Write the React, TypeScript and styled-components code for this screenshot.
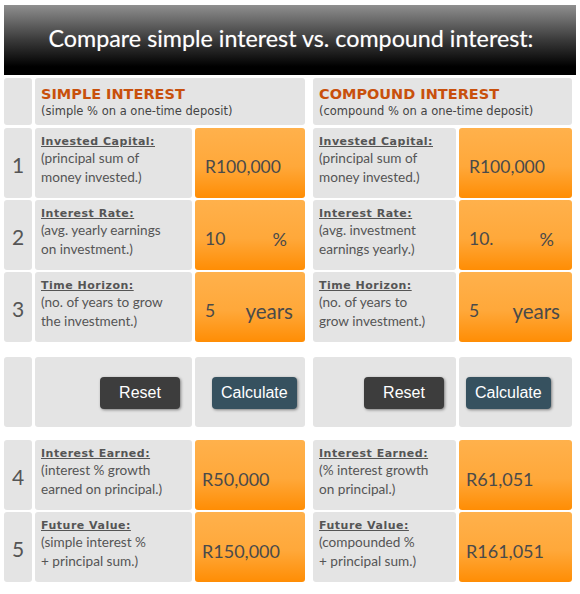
import * as React from "react";
import styled, { createGlobalStyle } from "styled-components";

interface Row {
  no: number;
  label: string;
  note: string;
  value: string;
  unit?: string;
}

const simpleInputs: Row[] = [
  { no: 1, label: "Invested Capital:", note: "(principal sum of\nmoney invested.)", value: "R100,000" },
  { no: 2, label: "Interest Rate:", note: "(avg. yearly earnings\non investment.)", value: "10", unit: "%" },
  { no: 3, label: "Time Horizon:", note: "(no. of years to grow\nthe investment.)", value: "5", unit: "years" },
];

const compoundInputs: Row[] = [
  { no: 1, label: "Invested Capital:", note: "(principal sum of\nmoney invested.)", value: "R100,000" },
  { no: 2, label: "Interest Rate:", note: "(avg. investment\nearnings yearly.)", value: "10.", unit: "%" },
  { no: 3, label: "Time Horizon:", note: "(no. of years to\ngrow investment.)", value: "5", unit: "years" },
];

const simpleResults: Row[] = [
  { no: 4, label: "Interest Earned:", note: "(interest % growth\nearned on principal.)", value: "R50,000" },
  { no: 5, label: "Future Value:", note: "(simple interest %\n+ principal sum.)", value: "R150,000" },
];

const compoundResults: Row[] = [
  { no: 4, label: "Interest Earned:", note: "(% interest growth\non principal.)", value: "R61,051" },
  { no: 5, label: "Future Value:", note: "(compounded %\n+ principal sum.)", value: "R161,051" },
];

const App = (): JSX.Element => {
  // one grid row = number + simple label/value + spacer + compound label/value
  const renderRows = (left: Row[], right: Row[], result?: boolean) =>
    left.map((row, i) => (
      <React.Fragment key={row.no}>
        <Num>{row.no}</Num>
        <Label>
          <Title>{row.label}</Title>
          <Note>{row.note}</Note>
        </Label>
        <Value result={result}>
          <span>{row.value}</span>
          {row.unit && <Unit percent={row.unit === "%"}>{row.unit}</Unit>}
        </Value>
        <Spacer />
        <Label>
          <Title>{right[i].label}</Title>
          <Note>{right[i].note}</Note>
        </Label>
        <Value result={result}>
          <span>{right[i].value}</span>
          {right[i].unit && <Unit percent={right[i].unit === "%"}>{right[i].unit}</Unit>}
        </Value>
      </React.Fragment>
    ));

  return (
    <Page>
      <GlobalStyle />
      <Banner>Compare simple interest vs. compound interest:</Banner>

      <Grid headRow>
        <Num />
        <Heading>
          <HeadTitle>SIMPLE INTEREST</HeadTitle>
          <HeadNote>(simple % on a one-time deposit)</HeadNote>
        </Heading>
        <Spacer />
        <Heading>
          <HeadTitle>COMPOUND INTEREST</HeadTitle>
          <HeadNote>(compound % on a one-time deposit)</HeadNote>
        </Heading>
        {renderRows(simpleInputs, compoundInputs)}
      </Grid>

      <Grid gapTop={15}>
        <Num />
        <ButtonCell align="end" pad="0 12px 0 0">
          <Button>Reset</Button>
        </ButtonCell>
        <ButtonCell align="start" pad="0 0 0 17px">
          <Button primary>Calculate</Button>
        </ButtonCell>
        <Spacer />
        <ButtonCell align="end" pad="0 12px 0 0">
          <Button>Reset</Button>
        </ButtonCell>
        <ButtonCell align="start" pad="0 0 0 7px">
          <Button primary>Calculate</Button>
        </ButtonCell>
      </Grid>

      <Grid gapTop={13}>{renderRows(simpleResults, compoundResults, true)}</Grid>
    </Page>
  );
};

export default App;

const GlobalStyle = createGlobalStyle`
  body {
    margin: 0;
    background: #fff;
  }
`;

const Page = styled.div`
  padding: 5px 4px 0;
  width: 572px;
`;

const Banner = styled.div`
  height: 70px;
  width: 572px;
  display: flex;
  align-items: center;
  justify-content: center;
  background: linear-gradient(#8f8f8f 0%, #3a3a3a 50%, #000 88%);
  color: #fff;
  font-family: Lato, "Open Sans", sans-serif;
  font-size: 23.3px;
  text-shadow: 0 0 1px rgba(255, 255, 255, 0.4);
  padding: 0 0 4px 2px;
  box-sizing: border-box;
`;

const Grid = styled.div<{ gapTop?: number; headRow?: boolean }>`
  display: grid;
  grid-template-columns: 28px 157px 110px 2px 143px 113px;
  grid-template-rows: ${(p) => (p.headRow ? "48px" : "70px")};
  grid-auto-rows: 70px;
  column-gap: 3px;
  row-gap: 2px;
  margin-top: ${(p) => p.gapTop ?? 3}px;
  width: 568px;

  & > :nth-child(-n + 4) {
    margin-bottom: ${(p) => (p.headRow ? "1px" : "0")};
  }
`;

const Cell = styled.div`
  background: #e4e4e4;
  border-radius: 3px;
`;

const Spacer = styled.div``;

const Num = styled(Cell)`
  display: flex;
  align-items: center;
  justify-content: center;
  font-family: Lato, "Open Sans", sans-serif;
  font-size: 21px;
  color: #555;
  padding-top: 2px;
`;

const Heading = styled(Cell)`
  grid-column: span 2;
  padding: 7px 0 0 6px;
  box-sizing: border-box;
`;

const HeadTitle = styled.div`
  font-family: "DejaVu Sans", Verdana, sans-serif;
  font-weight: bold;
  font-size: 14.5px;
  color: #c8500c;
  line-height: 18px;
`;

const HeadNote = styled.div`
  font-family: "DejaVu Sans", Verdana, sans-serif;
  font-size: 11.5px;
  color: #444;
  line-height: 17px;
`;

const Label = styled(Cell)`
  padding: 6px 0 0 6px;
  box-sizing: border-box;
`;

const Title = styled.div`
  font-family: "DejaVu Sans", Verdana, sans-serif;
  font-weight: bold;
  font-size: 11px;
  color: #555;
  text-decoration: underline;
  letter-spacing: 0.5px;
  line-height: 15px;
`;

const Note = styled.div`
  font-family: Lato, "Open Sans", sans-serif;
  font-size: 13.6px;
  color: #555;
  line-height: 19px;
  white-space: pre-line;
`;

const Value = styled.div<{ result?: boolean }>`
  display: flex;
  align-items: center;
  justify-content: space-between;
  border-radius: 3px;
  background: linear-gradient(#ffb14c 0%, #ffa83a 55%, #ff8d04 100%);
  font-family: Lato, "Open Sans", sans-serif;
  font-size: ${(p) => (p.result ? 18 : 17.5)}px;
  color: #4a4a4a;
  padding: 7px 12px 0 ${(p) => (p.result ? 7 : 10)}px;
  box-sizing: border-box;
`;

const Unit = styled.span<{ percent?: boolean }>`
  font-size: ${(p) => (p.percent ? 18 : 20.5)}px;
  margin-right: ${(p) => (p.percent ? 6 : 0)}px;
`;

const ButtonCell = styled(Cell)<{ align: "start" | "end"; pad: string }>`
  display: flex;
  align-items: center;
  justify-content: ${(p) => (p.align === "end" ? "flex-end" : "flex-start")};
  padding: ${(p) => p.pad};
  padding-top: 1px;
`;

const Button = styled.button<{ primary?: boolean }>`
  height: 32px;
  padding: 0 ${(p) => (p.primary ? 9 : 19)}px;
  min-width: 80px;
  border: none;
  border-radius: 4px;
  background: ${(p) => (p.primary ? "#36515f" : "#3d3d3d")};
  color: #fff;
  font-family: "Liberation Sans", Arial, sans-serif;
  font-size: 16px;
  box-shadow: 1px 1px 3px rgba(0, 0, 0, 0.45);
`;
